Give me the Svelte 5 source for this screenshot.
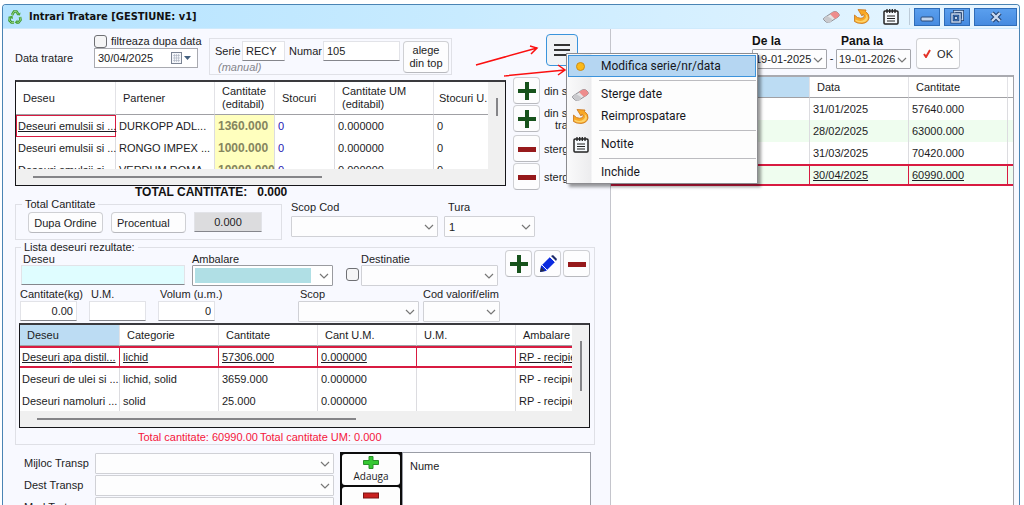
<script lang="ts">
	type Row = { cells: string[]; selected?: boolean };

	let filterByDate = $state(false);
	let useDestination = $state(false);
	let menuOpen = $state(true);

	const sources: Row[] = [
		{ cells: ['Deseuri emulsii si ...', 'DURKOPP ADL...', '1360.000', '0', '0.000000', '0'], selected: true },
		{ cells: ['Deseuri emulsii si ...', 'RONGO IMPEX ...', '1000.000', '0', '0.000000', '0'] },
		{ cells: ['Deseuri emulsii si ...', 'VERDUM ROMA...', '10000.000', '0', '0.000000', '0'] }
	];

	const results: Row[] = [
		{ cells: ['Deseuri apa distil...', 'lichid', '57306.000', '0.000000', '', 'RP - recipient'], selected: true },
		{ cells: ['Deseuri de ulei si ...', 'lichid, solid', '3659.000', '0.000000', '', 'RP - recipient'] },
		{ cells: ['Deseuri namoluri ...', 'solid', '25.000', '0.000000', '', 'RP - recipient'] }
	];

	const history: Row[] = [
		{ cells: ['31/01/2025', '57640.000'] },
		{ cells: ['28/02/2025', '63000.000'] },
		{ cells: ['31/03/2025', '70420.000'] },
		{ cells: ['30/04/2025', '60990.000'], selected: true }
	];

	const transport = [
		{ id: 'mijloc', label: 'Mijloc Transp' },
		{ id: 'dest', label: 'Dest Transp' },
		{ id: 'mod', label: 'Mod Tratare' }
	];
</script>

{#snippet chevron()}
	<svg class="chevron" viewBox="0 0 10 6" aria-hidden="true">
		<path d="M1 1l4 4 4-4" fill="none" stroke="#777" stroke-width="1.2" />
	</svg>
{/snippet}

{#snippet combo(id: string, value: string = '')}
	<span class="combo">
		<select {id}><option>{value}</option></select>
		{@render chevron()}
	</span>
{/snippet}

{#snippet plus()}
	<svg width="18" height="18" viewBox="0 0 18 18" aria-hidden="true">
		<path d="M7 0h4v7h7v4h-7v7H7v-7H0V7h7z" fill="#17531c" />
	</svg>
{/snippet}

{#snippet minus()}
	<svg width="18" height="18" viewBox="0 0 18 18" aria-hidden="true">
		<rect y="7" width="18" height="5" fill="#96191b" />
	</svg>
{/snippet}

{#snippet eraser()}
	<svg width="17" height="17" viewBox="0 0 17 17" aria-hidden="true">
		<path d="M1 10l9-6q2-1 4 0l2 2q1 2-1 3l-8 5q-2 1-4 0l-2-2q-1-1 0-2z" fill="#e4e4e6" stroke="#77777d" stroke-width=".8" />
		<path d="M7 6l3-2q2-1 4 0l2 2q1 2-1 3l-3 2z" fill="#ee8d8d" />
		<path d="M1 10l3-2 5 3-1 3-2 1-3-1z" fill="#c9c9cd" />
	</svg>
{/snippet}

{#snippet refresh()}
	<svg width="17" height="17" viewBox="0 0 17 17" aria-hidden="true">
		<path d="M5 1.500l8 .5-.5 1.500Q16.500 6 16 10q-1 5-7 5.500-5 0-7.500-2V7l3 2.500Q8 11 10.500 9.500 12 8 10 6l-1 2z" fill="#f8a825" stroke="#c8741a" stroke-width=".8" />
		<path d="M2.500 11.500Q8 14.500 12 11q2-2.500.500-5 2.500 1.500 2.500 4-1 4-6 4.500-4 0-6.500-1.500z" fill="#fdd36b" />
	</svg>
{/snippet}

{#snippet notes()}
	<svg width="16" height="17" viewBox="0 0 16 17" aria-hidden="true">
		<rect x="1" y="3" width="14" height="13" rx="1" fill="#f6fafd" stroke="#222" stroke-width="1.5" />
		<path d="M4 1v4M6.700 1v4M9.300 1v4M12 1v4" stroke="#222" stroke-width="1.300" />
		<path d="M4 8h8M4 10.500h8M4 13h8" stroke="#222" stroke-width="1.200" />
	</svg>
{/snippet}

<div class="window">
	<header class="titlebar">
		<svg width="14" height="14" viewBox="0 0 14 14" aria-hidden="true">
			<path d="M4 5l2-3.500h2.500l2 3M2 7l-.5 3.500L3.500 12.500H6M12 7l.5 3-2 2.500H8.500" fill="none" stroke="#3f9b34" stroke-width="2.600" />
			<path d="M4 5l2-3.500h2.500l2 3M2 7l-.5 3.500L3.500 12.500H6M12 7l.5 3-2 2.500H8.500" fill="none" stroke="#a6dc8c" stroke-width=".8" />
			<path d="M8.500 5l3.500.5.5-3zM4.500 5.500L0 7l5 2zM9.500 9.500l-3 3 3 1.500z" fill="#4ea63c" />
		</svg>
		<h1>Intrari Tratare [GESTIUNE: v1]</h1>
		<div class="quick">
			<button type="button" aria-label="Sterge date">{@render eraser()}</button>
			<button type="button" aria-label="Reimprospatare">{@render refresh()}</button>
			<button type="button" aria-label="Notite">{@render notes()}</button>
		</div>
		<div class="controls">
			<button type="button" aria-label="Minimizare">
				<svg width="14" height="14" viewBox="0 0 14 14">
					<rect x="1" y="7" width="12" height="4" rx="1" fill="#c3d6ee" stroke="#2a4a78" />
				</svg>
			</button>
			<button type="button" aria-label="Restaurare">
				<svg width="14" height="14" viewBox="0 0 14 14" fill="none">
					<path d="M4.500 4V1.500h8v8H10" stroke="#1f3f6e" stroke-width="3" />
					<path d="M4.500 4V1.500h8v8H10" stroke="#c3d6ee" stroke-width="1.500" />
					<rect x="2" y="4" width="8" height="8" fill="#4a8fe6" stroke="#1f3f6e" stroke-width="3" />
					<rect x="2" y="4" width="8" height="8" stroke="#c3d6ee" stroke-width="1.500" />
					<rect x="4.500" y="6.500" width="3" height="3" fill="#c3d6ee" stroke="#1f3f6e" stroke-width=".8" />
				</svg>
			</button>
			<button type="button" class="close" aria-label="Inchide">
				<svg width="12" height="12" viewBox="0 0 12 12" fill="none">
					<path d="M2 2l8 8M10 2l-8 8" stroke="#1f3f6e" stroke-width="4.500" />
					<path d="M2 2l8 8M10 2l-8 8" stroke="#c9daf0" stroke-width="2.400" />
				</svg>
			</button>
		</div>
	</header>

	<div class="panes">
		<main class="editor">
			<div class="top">
				<label for="data">Data tratare</label>
				<div class="date-col">
					<label class="check"><input type="checkbox" bind:checked={filterByDate} />filtreaza dupa data</label>
					<span class="date">
						<input id="data" type="text" value="30/04/2025" />
						<svg width="23" height="14" viewBox="0 0 23 14" aria-hidden="true">
							<rect x="1.500" y="1.500" width="10" height="11" fill="#f4f6fa" stroke="#7b8494" />
							<path d="M3 4.500h7M3 7h7M3 9.500h7M4.500 3v8M6.500 3v8M8.500 3v8" stroke="#aab2c0" stroke-width=".6" />
							<path d="M14 5h7l-3.500 4z" fill="#44607f" />
						</svg>
					</span>
				</div>
				<div class="series">
					<div>
						<div class="pair">
							<label for="serie">Serie</label>
							<input id="serie" type="text" value="RECY" />
							<label for="numar">Numar</label>
							<input id="numar" type="text" value="105" />
						</div>
						<em>(manual)</em>
					</div>
					<button type="button" class="btn pick">alege<br />din top</button>
				</div>
				<div class="menu-anchor">
					<button type="button" class="burger" aria-label="Meniu" onclick={() => (menuOpen = !menuOpen)}>
						<svg width="18" height="14" viewBox="0 0 18 14">
							<path d="M1 2h16M1 7h16M1 12h16" stroke="#333" stroke-width="2" />
						</svg>
					</button>
					<svg class="arrows" width="94" height="36" viewBox="0 0 94 36" fill="none" stroke="#fb1010" stroke-width="1.500" aria-hidden="true">
						<path d="M2 20L63 3M56 1l7 2-6 6M30 31l61-6M84 20l7 5-7 5" />
					</svg>
					{#if menuOpen}
						<div class="menu" role="menu">
							<button type="button" role="menuitem" class="current">
								<span class="ico">
									<svg width="9" height="9" viewBox="0 0 9 9"><circle cx="4.500" cy="4.500" r="4" fill="#fbb917" stroke="#c98c1c" /></svg>
								</span>Modifica serie/nr/data
							</button>
							<hr />
							<button type="button" role="menuitem"><span class="ico">{@render eraser()}</span>Sterge date</button>
							<button type="button" role="menuitem"><span class="ico">{@render refresh()}</span>Reimprospatare</button>
							<hr />
							<button type="button" role="menuitem"><span class="ico">{@render notes()}</span>Notite</button>
							<hr />
							<button type="button" role="menuitem"><span class="ico"></span>Inchide</button>
						</div>
					{/if}
				</div>
			</div>

			<div class="sources">
				<div class="sources-main">
					<div class="sheet sheet-sources">
						<div class="view">
							<table>
								<colgroup>
									<col class="c100" /><col class="c99" /><col class="c60" /><col class="c60" /><col class="c99" /><col />
								</colgroup>
								<thead>
									<tr>
										<th>Deseu</th>
										<th>Partener</th>
										<th>Cantitate<br />(editabil)</th>
										<th>Stocuri</th>
										<th>Cantitate UM<br />(editabil)</th>
										<th>Stocuri U.</th>
									</tr>
								</thead>
								<tbody>
									{#each sources as row}
										<tr>
											{#each row.cells as cell, i}
												<td class:cell-current={row.selected && i === 0} class:qty={i === 2} class:stock={i === 3}>{cell}</td>
											{/each}
										</tr>
									{/each}
								</tbody>
							</table>
						</div>
						<div class="vbar"><i></i></div>
						<div class="hbar"><i></i></div>
					</div>
					<p class="grand">TOTAL CANTITATE:&nbsp;&nbsp; 0.000</p>
				</div>
				<div class="side">
					<div><button type="button" class="btn icon" aria-label="Adauga din stoc">{@render plus()}</button><span>din stoc</span></div>
					<div><button type="button" class="btn icon" aria-label="Adauga din stoc trat">{@render plus()}</button><span>din stoc<br />trat</span></div>
					<div class="apart"><button type="button" class="btn icon" aria-label="Sterge">{@render minus()}</button><span>sterge</span></div>
					<div><button type="button" class="btn icon" aria-label="Sterge tot">{@render minus()}</button><span>sterge</span></div>
				</div>
			</div>

			<div class="totals">
				<fieldset class="distribute">
					<legend>Total Cantitate</legend>
					<div class="distribute-row">
						<button type="button" class="btn wide">Dupa Ordine</button>
						<button type="button" class="btn wide start">Procentual</button>
						<input class="readonly" type="text" value="0.000" readonly aria-label="Total cantitate" />
					</div>
				</fieldset>
				<div class="field w147"><label for="scop-cod">Scop Cod</label>{@render combo('scop-cod')}</div>
				<div class="field w91 inset"><label for="tura">Tura</label>{@render combo('tura', '1')}</div>
			</div>

			<fieldset class="results">
				<legend>Lista deseuri rezultate:</legend>
				<div class="line">
					<div class="field w164 nudged"><label for="deseu">Deseu</label><input id="deseu" class="cyan" type="text" /></div>
					<div class="field w141 teal"><label for="ambalare">Ambalare</label>{@render combo('ambalare')}</div>
					<input class="dest-check" type="checkbox" bind:checked={useDestination} aria-label="Foloseste destinatie" />
					<div class="field w137"><label for="destinatie">Destinatie</label>{@render combo('destinatie')}</div>
					<div class="tools">
						<button type="button" class="btn icon" aria-label="Adauga">{@render plus()}</button>
						<button type="button" class="btn icon" aria-label="Modifica">
							<svg width="18" height="18" viewBox="0 0 18 18" aria-hidden="true">
								<path d="M1 17l1-6L11 2l5 5-9 9z" fill="#0b2be0" />
								<path d="M12 1l2-1 4 4-1 2z" fill="#1c2a6b" />
								<path d="M1 17l1-5 4 4z" fill="#222a4a" />
								<path d="M11 2l5 5M3 10l5 5" stroke="#f4f6ff" />
							</svg>
						</button>
						<button type="button" class="btn icon" aria-label="Sterge">{@render minus()}</button>
					</div>
				</div>
				<div class="line second">
					<div class="field w57"><label for="kg">Cantitate(kg)</label><input id="kg" class="num" type="text" value="0.00" /></div>
					<div class="field w57 um nudged"><label for="um">U.M.</label><input id="um" type="text" /></div>
					<div class="field w57 nudged"><label for="volum">Volum (u.m.)</label><input id="volum" class="num" type="text" value="0" /></div>
					<div class="field w121 scop nudged"><label for="scop">Scop</label>{@render combo('scop')}</div>
					<div class="field w77"><label for="cod">Cod valorif/elim</label>{@render combo('cod')}</div>
				</div>
				<div class="sheet sheet-results">
					<div class="view">
						<table>
							<colgroup>
								<col class="c100" /><col class="c99" /><col class="c99" /><col class="c99" /><col class="c99" /><col />
							</colgroup>
							<thead>
								<tr>
									<th class="sorted">Deseu</th>
									<th>Categorie</th>
									<th>Cantitate</th>
									<th>Cant U.M.</th>
									<th>U.M.</th>
									<th>Ambalare</th>
								</tr>
							</thead>
							<tbody>
								{#each results as row}
									<tr class:selected={row.selected}>
										{#each row.cells as cell}
											<td>{cell}</td>
										{/each}
									</tr>
								{/each}
							</tbody>
						</table>
					</div>
					<div class="vbar"><i></i></div>
					<div class="hbar"><i></i></div>
				</div>
				<p class="sum">
					<span>Total cantitate: 60990.00</span><span>Total cantitate UM: 0.000</span>
				</p>
			</fieldset>

			<div class="bottom">
				<div class="transport">
					{#each transport as item (item.id)}
						<label for={item.id}>{item.label}</label>
						{@render combo(item.id)}
					{/each}
				</div>
				<div class="actions">
					<button type="button">
						<svg width="16" height="13" viewBox="0 0 16 13" aria-hidden="true">
							<path d="M6 .5h4v4h5.500v4H10v4H6v-4H.5v-4H6z" fill="#35c832" stroke="#2a8f2a" />
						</svg>
						Adauga
					</button>
					<button type="button">
						<svg width="16" height="13" viewBox="0 0 16 13" aria-hidden="true">
							<rect x=".5" y="4" width="15" height="5" fill="#c9201f" stroke="#7d1414" />
						</svg>
						Sterge
					</button>
				</div>
				<div class="names">Nume</div>
			</div>
		</main>

		<aside class="history">
			<div class="period">
				<div class="field"><label for="de-la">De la</label>{@render combo('de-la', '19-01-2025')}</div>
				<span class="dash">-</span>
				<div class="field until"><label for="pana-la">Pana la</label>{@render combo('pana-la', '19-01-2026')}</div>
				<button type="button" class="btn ok">
					<svg width="8" height="9" viewBox="0 0 8 9" aria-hidden="true">
						<path d="M1 5l2 3 4-7" fill="none" stroke="#e3342a" stroke-width="2" />
					</svg>
					OK
				</button>
			</div>
			<div class="history-list">
				<table>
					<colgroup><col class="c100" /><col class="c99" /><col class="c99" /><col class="c99" /><col /></colgroup>
					<thead>
						<tr><th></th><th class="sorted"></th><th>Data</th><th>Cantitate</th><th></th></tr>
					</thead>
					<tbody>
						{#each history as row}
							<tr class:selected={row.selected}>
								<td></td>
								<td></td>
								{#each row.cells as cell}
									<td>{cell}</td>
								{/each}
								<td></td>
							</tr>
						{/each}
					</tbody>
				</table>
			</div>
		</aside>
	</div>
</div>

<style>
	:global(body) {
		background: #fff;
	}

	.window,
	.window * {
		box-sizing: border-box;
	}

	.window {
		border: 1px solid #4a84b4;
		border-bottom: 0;
		border-radius: 4px 4px 0 0;
		color: #1c1c24;
		display: flex;
		flex-direction: column;
		font: 11px/12px 'Liberation Sans', Arial, sans-serif;
		height: calc(100vh - 4px);
		margin: 4px 4px 0 2px;
		overflow: hidden;
	}

	button,
	input,
	select {
		color: inherit;
		font: inherit;
		margin: 0;
	}

	.titlebar {
		align-items: center;
		background: linear-gradient(90deg, #b5e3ff, #c8ebff 45%, #e9f6ff);
		border-bottom: 1px solid #cfeafc;
		display: flex;
		flex: none;
		height: 24px;
		padding: 0 2px 0 5px;
	}

	h1 {
		color: #111;
		flex: 1;
		font: bold 11px/16px 'DejaVu Sans Condensed', 'DejaVu Sans', sans-serif;
		margin: 0 0 0 7px;
	}

	.quick {
		border-right: 1px solid #bccbd8;
		display: flex;
		gap: 13px;
		margin-right: 4px;
		padding-right: 10px;
	}

	.quick button {
		background: none;
		border: 0;
		display: flex;
		padding: 0;
	}

	.controls {
		display: flex;
		gap: 4px;
	}

	.controls button {
		align-items: center;
		background: linear-gradient(#5a9fee, #468be0);
		border: 1px solid #2f6db8;
		display: flex;
		height: 18px;
		justify-content: center;
		padding: 0;
		width: 26px;
	}

	.controls .close {
		width: 43px;
	}

	.panes {
		background: #f8f9ff;
		display: grid;
		flex: 1;
		grid-template-columns: minmax(0, 1fr) 409px;
		min-height: 0;
	}

	.editor {
		padding: 5px 15px 0 12px;
	}

	.btn {
		background: #fdfdfe;
		border: 1px solid #cfd0d4;
		border-bottom-color: #b8b9be;
		border-radius: 4px;
		padding: 0;
	}

	.btn.icon {
		align-items: center;
		display: flex;
		flex: none;
		height: 27px;
		justify-content: center;
		width: 27px;
	}

	input[type='text'] {
		background: #fff;
		border: 1px solid #e2e3e8;
		border-bottom-color: #85868c;
		height: 20px;
		min-width: 0;
		padding: 0 3px;
		width: 100%;
	}

	input[type='checkbox'] {
		appearance: none;
		background: #f5f5f6;
		border: 1px solid #6f7074;
		border-radius: 3px;
		flex: none;
		height: 13px;
		width: 13px;
	}

	.combo {
		display: block;
		position: relative;
	}

	.combo select {
		appearance: none;
		background: #fdfdfe;
		border: 1px solid #d0d1d6;
		border-radius: 1px;
		display: block;
		height: 21px;
		padding: 0 4px;
		width: 100%;
	}

	.chevron {
		height: 6px;
		pointer-events: none;
		position: absolute;
		right: 4px;
		top: 8px;
		width: 10px;
	}

	.top {
		display: flex;
		height: 43px;
	}

	.top > label {
		margin-top: 18px;
		width: 79px;
	}

	.date-col {
		width: 106px;
	}

	.check {
		align-items: center;
		display: flex;
		gap: 4px;
		height: 14px;
		white-space: nowrap;
	}

	.date {
		align-items: center;
		background: #fff;
		border: 1px solid #a9aab0;
		display: flex;
		height: 20px;
		padding-right: 4px;
		width: 104px;
	}

	.date input[type='text'] {
		background: none;
		border: 0;
		height: 18px;
	}

	.date svg {
		flex: none;
	}

	.series {
		border: 1px solid #e0e1e7;
		display: flex;
		gap: 3px;
		height: 37px;
		margin: 4px 0 0 9px;
		padding: 2px 2px 0 5px;
		width: 243px;
	}

	.pair {
		align-items: center;
		display: grid;
		grid-template-columns: 27px 43px 38px 77px;
	}

	.pair label + input + label {
		padding-left: 4px;
	}

	.series em {
		color: #85858c;
		display: block;
		padding-left: 3px;
	}

	.pick {
		height: 32px;
		line-height: 13px;
		width: 46px;
	}

	.menu-anchor {
		margin-left: auto;
		margin-right: 17px;
		position: relative;
	}

	.burger {
		align-items: center;
		background: #f1f3f6;
		border: 1px solid #3a94dc;
		border-radius: 4px;
		display: flex;
		height: 32px;
		justify-content: center;
		padding: 0;
		width: 32px;
	}

	.burger svg {
		flex: none;
	}

	.arrows {
		left: -72px;
		pointer-events: none;
		position: absolute;
		top: 11px;
		z-index: 3;
	}

	.menu {
		background: linear-gradient(90deg, #fafafb, #ececee 24px, #fdfdfd 25px);
		border: 1px solid #8c8c90;
		box-shadow: 3px 3px 3px rgb(0 0 0 / 40%);
		left: 20px;
		padding: 1px 1px 0;
		position: absolute;
		top: 19px;
		width: 192px;
		z-index: 2;
	}

	.menu button {
		align-items: center;
		background: none;
		border: 1px solid transparent;
		color: #16161c;
		display: flex;
		font: 12px/16px Roboto, 'Open Sans', sans-serif;
		height: 22px;
		padding: 0;
		white-space: nowrap;
		width: 100%;
	}

	.menu .current {
		background: #b5d6f2;
		border-color: #3d94dc;
	}

	.menu .ico {
		display: flex;
		justify-content: center;
		margin-right: 9px;
		width: 23px;
	}

	.menu hr {
		border: 0;
		border-top: 1px solid #bcbcc0;
		margin: 3px 0 2px 31px;
	}

	.sources {
		display: flex;
		gap: 7px;
	}

	.sources-main {
		flex: 1;
		min-width: 0;
		padding-top: 3px;
	}

	.sheet {
		background: #f0f0f0;
		border: 1px solid #16161a;
		border-top: 2px solid #3a3a3e;
		display: grid;
		grid-template-columns: minmax(0, 1fr) 17px;
	}

	.view {
		background: #fff;
		overflow: hidden;
	}

	.sheet-sources .view {
		height: 87px;
	}

	.sheet-results .view {
		height: 86px;
	}

	.vbar {
		display: flex;
		justify-content: center;
	}

	.vbar i {
		background: #858588;
		height: 50px;
		margin-top: 16px;
		width: 2px;
	}

	.sheet-sources .vbar i {
		height: 18px;
	}

	.hbar {
		align-items: center;
		display: flex;
		grid-column: 1 / -1;
		height: 16px;
	}

	.hbar i {
		background: #858588;
		height: 2px;
		margin-left: 17px;
		width: 59%;
	}

	.sheet-results .hbar i {
		width: 56%;
	}

	table {
		border-spacing: 0;
		table-layout: fixed;
		width: 100%;
	}

	.c100 {
		width: 100px;
	}

	.c99 {
		width: 99px;
	}

	.c60 {
		width: 60px;
	}

	th {
		border-bottom: 1px solid #a0a0a4;
		border-right: 1px solid #e2e2e6;
		font-weight: normal;
		height: 21px;
		padding: 0 0 0 7px;
		text-align: left;
		white-space: nowrap;
	}

	.sheet-sources th {
		height: 33px;
		line-height: 13px;
	}

	.sheet-sources th:last-child {
		padding-left: 5px;
	}

	td {
		border-right: 1px solid #dcdce0;
		height: 22px;
		padding: 0 0 0 3px;
		white-space: nowrap;
	}

	td:first-child {
		padding-left: 2px;
	}

	th:last-child,
	td:last-child {
		border-right: 0;
	}

	.sorted {
		background: #bcdcf3;
	}

	.qty {
		background: #ffffbe;
		color: #85855e;
		font-size: 12px;
		font-weight: bold;
	}

	.stock {
		color: #2416b4;
	}

	td.cell-current {
		border: 1px solid #d81b41;
		padding-left: 1px;
		text-decoration: underline;
	}

	.selected td {
		border-bottom: 2px solid #d81b41;
		border-right-color: #d81b41;
		border-top: 2px solid #d81b41;
		text-decoration: underline;
	}

	.grand {
		color: #111;
		font-size: 12px;
		font-weight: bold;
		margin: 0 0 0 120px;
	}

	.side {
		width: 82px;
	}

	.side div {
		align-items: center;
		display: flex;
		gap: 4px;
		margin-bottom: 1px;
		text-align: center;
		white-space: nowrap;
	}

	.side .apart {
		margin-top: 3px;
	}

	fieldset {
		border: 1px solid #dfe0e6;
		margin: 0;
		min-width: 0;
		padding: 0;
	}

	legend {
		margin-left: 6px;
		padding: 0 3px;
	}

	.totals {
		display: flex;
	}

	.distribute {
		height: 42px;
		margin-right: 9px;
		width: 267px;
	}

	.distribute-row {
		display: flex;
		gap: 8px;
		padding: 2px 0 0 12px;
	}

	.btn.wide {
		height: 21px;
		width: 75px;
	}

	.btn.start {
		padding-left: 5px;
		text-align: left;
	}

	.distribute-row .readonly {
		background: #dcdcde;
		text-align: center;
		width: 68px;
	}

	.field label {
		display: block;
		white-space: nowrap;
	}

	.nudged label {
		padding-left: 2px;
	}

	.totals .field {
		margin-right: 6px;
		padding-top: 3px;
	}

	.totals .field label {
		margin-bottom: 3px;
	}

	.totals .inset label {
		padding-left: 4px;
	}

	.w57 {
		width: 57px;
	}

	.w77 {
		width: 77px;
	}

	.w91 {
		width: 91px;
	}

	.w121 {
		width: 121px;
	}

	.w137 {
		width: 137px;
	}

	.w141 {
		width: 141px;
	}

	.w147 {
		width: 147px;
	}

	.w164 {
		width: 164px;
	}

	.results {
		margin-top: 1px;
		padding: 0 4px 0 3px;
	}

	.results legend {
		margin-left: 2px;
	}

	.line {
		display: flex;
		padding-left: 2px;
	}

	.teal {
		margin: 0 13px 0 7px;
	}

	.teal select {
		background: #b0dfe5;
		border-color: #9a9ba0;
		box-shadow: inset 0 0 0 2px #fff, inset -21px 0 #fff;
	}

	.line .cyan {
		background: #dffdff;
	}

	.line .dest-check {
		margin: 15px 2px 0 0;
	}

	.tools {
		display: flex;
		gap: 2px;
		margin: -3px 0 0 auto;
	}

	.second {
		margin: 2px 0 1px;
		padding-left: 1px;
	}

	.um {
		margin: 0 12px;
	}

	.num {
		text-align: right;
	}

	.scop {
		margin: 0 4px 0 83px;
	}

	.second .combo,
	.second input {
		margin-top: 1px;
	}

	.sum {
		color: #f5163b;
		display: flex;
		gap: 2px;
		margin: 3px 0 1px 119px;
	}

	.bottom {
		display: flex;
		padding: 7px 4px 0 9px;
	}

	.transport {
		align-items: center;
		display: grid;
		grid-auto-rows: 22px;
		grid-template-columns: 71px 239px;
	}

	.actions {
		background: #0c0c0c;
		display: grid;
		gap: 2px;
		grid-auto-rows: 31px;
		margin-left: 6px;
		padding: 2px;
		width: 62px;
	}

	.actions button {
		align-items: center;
		background: #fdfdfd;
		border: 0;
		border-radius: 3px;
		display: flex;
		flex-direction: column;
		font: 10px/14px 'Open Sans', 'Noto Sans', sans-serif;
		padding: 2px 0 0;
	}

	.names {
		background: #fff;
		border: 1px solid #9a9da6;
		flex: 1;
		padding: 7px;
	}

	.history {
		border-left: 1px solid #c4c5cc;
		display: flex;
		flex-direction: column;
		padding-right: 5px;
	}

	.period {
		align-items: flex-end;
		display: flex;
		height: 46px;
		justify-content: flex-end;
		padding: 0 54px 6px 0;
	}

	.period .field {
		width: 75px;
	}

	.period label {
		color: #111;
		font-size: 12px;
		font-weight: bold;
		margin-bottom: 2px;
	}

	.period .until label {
		padding-left: 5px;
	}

	.period select {
		border-color: #a4a5ab;
		height: 20px;
		padding: 0 2px;
	}

	.dash {
		height: 17px;
		text-align: center;
		width: 9px;
	}

	.ok {
		height: 31px;
		margin-left: 5px;
		width: 44px;
	}

	.ok svg {
		margin-right: 3px;
	}

	.history-list {
		background: #fff;
		border-right: 1px solid #a0a1a8;
		border-top: 2px solid #a9aab0;
		flex: 1;
	}

	.history-list tr:nth-child(even) td {
		background: #effdef;
	}
</style>
